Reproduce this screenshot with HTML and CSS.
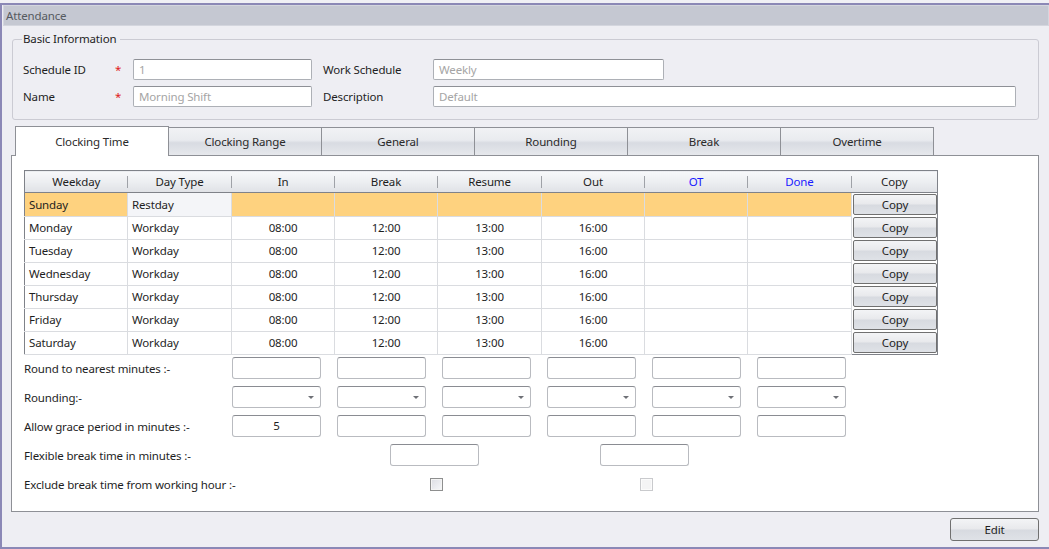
FILE: index.html
```html
<!DOCTYPE html>
<html>
<head>
<meta charset="utf-8">
<link rel="stylesheet" href="styles.css">
</head>
<body>
<div class="window">
  <div class="titlebar">Attendance</div>
  <div class="content">
    <fieldset class="basic">
      <legend>Basic Information</legend>
      <div class="basic-grid">
        <span class="lbl">Schedule ID</span><span class="star">*</span><div class="input ro">1</div><span></span>
        <span class="lbl">Work Schedule</span><div class="input ro short">Weekly</div>
        <span class="lbl">Name</span><span class="star">*</span><div class="input ro">Morning Shift</div><span></span>
        <span class="lbl">Description</span><div class="input ro">Default</div>
      </div>
    </fieldset>

    <div class="tabs">
      <div class="tab active">Clocking Time</div>
      <div class="tab">Clocking Range</div>
      <div class="tab">General</div>
      <div class="tab">Rounding</div>
      <div class="tab">Break</div>
      <div class="tab">Overtime</div>
    </div>
    <div class="panel">
      <table class="grid">
        <colgroup>
          <col class="c-wd"><col class="c-dt"><col class="c-t"><col class="c-t2"><col class="c-t3"><col class="c-t"><col class="c-t2"><col class="c-t3"><col class="c-cp">
        </colgroup>
        <thead>
          <tr>
            <th>Weekday</th><th>Day Type</th><th>In</th><th>Break</th><th>Resume</th><th>Out</th><th class="blue">OT</th><th class="blue">Done</th><th class="last">Copy</th>
          </tr>
        </thead>
        <tbody>
          <tr class="rest"><td>Sunday</td><td class="dt">Restday</td><td></td><td></td><td></td><td></td><td></td><td></td><td class="cp"><div class="btn">Copy</div></td></tr>
          <tr><td>Monday</td><td>Workday</td><td class="c">08:00</td><td class="c">12:00</td><td class="c">13:00</td><td class="c">16:00</td><td></td><td></td><td class="cp"><div class="btn">Copy</div></td></tr>
          <tr><td>Tuesday</td><td>Workday</td><td class="c">08:00</td><td class="c">12:00</td><td class="c">13:00</td><td class="c">16:00</td><td></td><td></td><td class="cp"><div class="btn">Copy</div></td></tr>
          <tr><td>Wednesday</td><td>Workday</td><td class="c">08:00</td><td class="c">12:00</td><td class="c">13:00</td><td class="c">16:00</td><td></td><td></td><td class="cp"><div class="btn">Copy</div></td></tr>
          <tr><td>Thursday</td><td>Workday</td><td class="c">08:00</td><td class="c">12:00</td><td class="c">13:00</td><td class="c">16:00</td><td></td><td></td><td class="cp"><div class="btn">Copy</div></td></tr>
          <tr><td>Friday</td><td>Workday</td><td class="c">08:00</td><td class="c">12:00</td><td class="c">13:00</td><td class="c">16:00</td><td></td><td></td><td class="cp"><div class="btn">Copy</div></td></tr>
          <tr><td>Saturday</td><td>Workday</td><td class="c">08:00</td><td class="c">12:00</td><td class="c">13:00</td><td class="c">16:00</td><td></td><td></td><td class="cp"><div class="btn">Copy</div></td></tr>
        </tbody>
      </table>

      <div class="opts">
        <span class="olbl">Round to nearest minutes :-</span>
        <div class="input"></div><div class="input"></div><div class="input"></div><div class="input"></div><div class="input"></div><div class="input"></div>

        <span class="olbl">Rounding:-</span>
        <div class="input combo"></div><div class="input combo"></div><div class="input combo"></div><div class="input combo"></div><div class="input combo"></div><div class="input combo"></div>

        <span class="olbl">Allow grace period in minutes :-</span>
        <div class="input num">5</div><div class="input"></div><div class="input"></div><div class="input"></div><div class="input"></div><div class="input"></div>

        <span class="olbl">Flexible break time in minutes :-</span>
        <span></span>
        <div class="input span2"></div>
        <div class="input span2"></div>
        <span></span>

        <span class="olbl">Exclude break time from working hour :-</span>
        <span></span>
        <div class="span2 chkcell"><span class="chk"></span></div>
        <div class="span2 chkcell"><span class="chk disabled"></span></div>
        <span></span>
      </div>
    </div>
    <div class="actions">
      <div class="btn edit">Edit</div>
    </div>
  </div>
</div>
</body>
</html>
```
FILE: styles.css
```css
* { box-sizing: border-box; }
html, body {
  margin: 0;
  padding: 0;
  background: #f0f0f5;
  font-family: "Noto Sans", "Open Sans", sans-serif;
  font-size: 11.5px;
  letter-spacing: -0.15px;
  color: #1e1e1e;
}
.window {
  margin-top: 3px;
  height: 546px;
  border-left: 2px solid #8b88b6;
  border-top: 2px solid #8b88b6;
  border-bottom: 2px solid #8b88b6;
  background: #eeeef3;
  padding-left: 1px;
}
.titlebar {
  height: 21px;
  background: #c5c8d2;
  border: 1px solid #d4d6de;
  color: #555a60;
  line-height: 20px;
  padding-left: 2px;
}
.content {
  padding: 0 10px 0 8px;
}
.basic {
  margin: 5px 0 0 1px;
  padding: 2px 10px 13px 10px;
  border: 1px solid #cbcbd3;
  border-radius: 3px;
  height: 89px;
}
.basic legend {
  padding: 0 4px 0 1px;
  margin-left: -1px;
  line-height: 16px;
  color: #1e1e1e;
}
.basic-grid {
  display: grid;
  grid-template-columns: 92px 18px 179px 11px 110px 583px;
  grid-auto-rows: 21px;
  row-gap: 6px;
  align-items: center;
  margin-top: 10px;
}
.star { color: #e02020; padding-left: 0; }
.input {
  height: 21px;
  background: #fff;
  border: 1px solid #adb0b6;
  border-top-color: #8e9096;
  border-radius: 2px;
  padding-left: 5px;
  line-height: 19px;
}
.input.ro { color: #a5a5a5; }
.input.short { width: 231px; }

.tabs {
  display: flex;
  margin-top: 7px;
  padding-left: 4px;
  height: 28px;
  align-items: flex-end;
  position: relative;
  z-index: 1;
}
.tab {
  width: 153px;
  height: 28px;
  border: 1px solid #8e9096;
  border-bottom: none;
  border-left: none;
  background: linear-gradient(#f1f2f5 0%, #e9ebef 45%, #d8dbe2 55%, #e6e8ec 100%);
  text-align: center;
  line-height: 28px;
  color: #2a2a2a;
}
.tab.active {
  width: 154px;
  height: 30px;
  margin-bottom: -1px;
  background: #fff;
  border-left: 1px solid #8e9096;
  line-height: 30px;
}
.panel {
  height: 357px;
  background: #fff;
  border: 1px solid #8e9096;
  padding: 14px 12px 0 12px;
}
.grid {
  border-collapse: collapse;
  border: 1px solid #7f8289;
  table-layout: fixed;
  width: 914px;
}
.c-wd { width: 103px; }
.c-dt { width: 104px; }
.c-t { width: 103px; }
.c-t2 { width: 103px; }
.c-t3 { width: 104px; }
.c-cp { width: 86px; }
.grid th {
  height: 22px;
  padding: 0 0 1px 0;
  font-weight: normal;
  color: #1e1e1e;
  background: linear-gradient(#f7f8fa 0%, #eceef1 50%, #dfe1e6 100%);
  border-bottom: 1px solid #7f8289;
  position: relative;
}
.grid th::after {
  content: "";
  position: absolute;
  right: 0;
  top: 5px;
  height: 12px;
  width: 1px;
  background: #9fa2a8;
}
.grid th.last::after { display: none; }
.grid th.blue { color: #1a1aff; }
.grid td {
  height: 23px;
  padding: 0 0 0 4px;
  border-right: 1px solid #dadce0;
  border-bottom: 1px solid #dadce0;
  white-space: nowrap;
}
.grid td.c { text-align: center; padding: 0; }
.grid tr.rest td { background: #fed27f; }
.grid tr.rest td.dt { background: #f4f5f8; }
.grid tr.rest td.cp, .grid td.cp { background: #fff; padding: 0; border-right: none; border-bottom: none; }
.btn {
  height: 21px;
  margin: 1px 0 1px 1px;
  border: 1px solid #707070;
  border-radius: 2px;
  background: linear-gradient(#f3f4f6 0%, #e8e9ec 48%, #d7dae0 52%, #dfe2e7 100%);
  text-align: center;
  line-height: 19px;
  color: #1e1e1e;
}
.opts {
  display: grid;
  grid-template-columns: 192px repeat(6, 89px);
  column-gap: 16px;
  grid-auto-rows: 22px;
  row-gap: 7px;
  align-items: center;
  margin-top: 2px;
}
.opts .input {
  height: 22px;
  border-color: #b9bbc0;
  border-top-color: #8a8c92;
  border-radius: 3px;
}
.opts .input.num { text-align: center; padding: 0; line-height: 20px; }
.olbl { white-space: nowrap; }
.span2 { grid-column: span 2; justify-self: center; width: 89px; }
.combo { position: relative; }
.combo::after {
  content: "";
  position: absolute;
  right: 6px;
  top: 9px;
  border-left: 3px solid transparent;
  border-right: 3px solid transparent;
  border-top: 3px solid #6e7076;
}
.chkcell {
  display: flex;
  justify-content: center;
  align-items: center;
  height: 22px;
}
.chk {
  width: 13px;
  height: 13px;
  border: 1px solid #8e8f8f;
  background: linear-gradient(135deg, #dcdde3, #f7f8fa);
  box-shadow: inset 0 0 0 1px #f4f4f4;
  display: block;
  margin-left: 5px;
}
.chk.disabled {
  border-color: #c9cacd;
  background: #f4f4f5;
  box-shadow: inset 0 0 0 1px #fbfbfb;
  margin-left: 5px;
}
.actions {
  display: flex;
  justify-content: flex-end;
  margin-top: 6px;
}
.btn.edit {
  width: 89px;
  height: 23px;
  margin: 0;
  line-height: 21px;
  border-color: #707070;
  border-radius: 3px;
}
```
